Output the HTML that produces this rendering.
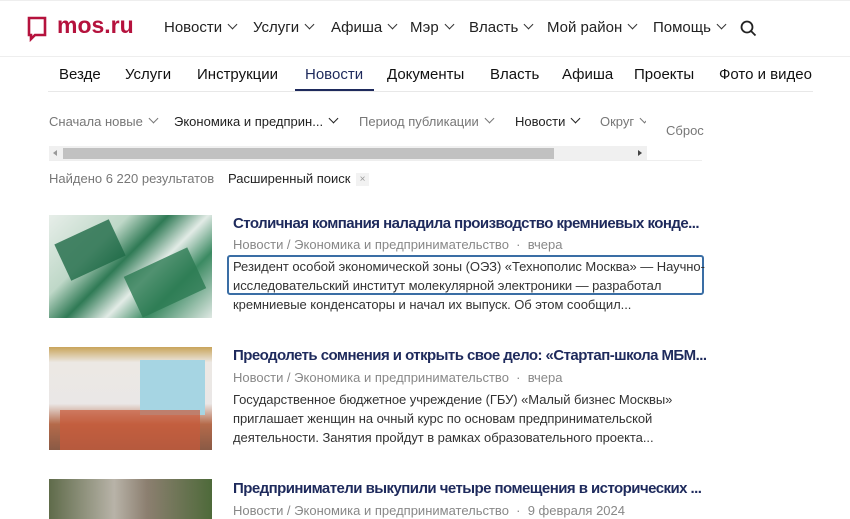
<!DOCTYPE html>
<html><head><meta charset="utf-8"><style>
*{margin:0;padding:0;box-sizing:border-box}
body{width:850px;height:508px;overflow:hidden;background:#fff;font-family:"Liberation Sans","DejaVu Sans",sans-serif;color:#222;position:relative}
.a{position:absolute;white-space:nowrap}
.chev{display:inline-block;width:7px;height:7px;border-right:1.5px solid #333;border-bottom:1.5px solid #333;transform:rotate(45deg);margin-left:7px;position:relative;top:-4px}
.top{font-size:15px;color:#222;top:19px}
.tab{font-size:15px;top:66px;color:#111}
.f{font-size:13px;top:114px;color:#777}
.t{font-size:15px;font-weight:bold;color:#1e2a5c;letter-spacing:-0.55px}
.m{font-size:13px;color:#888}
.d{font-size:13px;color:#333;line-height:19px;letter-spacing:-0.05px}
</style></head><body>
<div class="a" style="top:0;left:0;width:850px;height:1px;background:#eee"></div>
<svg class="a" style="left:27px;top:16px" width="20" height="26" viewBox="0 0 20 26"><path d="M2 2H18V19H8L4 23V19H2Z" fill="none" stroke="#b5123d" stroke-width="2.6" stroke-linejoin="miter"/></svg>
<div class="a" style="left:57px;top:12px;font-size:23px;font-weight:bold;color:#b5123d">mos.ru</div>
<div class="a top" style="left:164px">Новости<span class="chev"></span></div>
<div class="a top" style="left:253px">Услуги<span class="chev"></span></div>
<div class="a top" style="left:331px">Афиша<span class="chev"></span></div>
<div class="a top" style="left:410px">Мэр<span class="chev"></span></div>
<div class="a top" style="left:469px">Власть<span class="chev"></span></div>
<div class="a top" style="left:547px">Мой район<span class="chev"></span></div>
<div class="a top" style="left:653px">Помощь<span class="chev"></span></div>
<svg class="a" style="left:740px;top:20px" width="17" height="17" viewBox="0 0 17 17"><circle cx="7" cy="7" r="5.5" fill="none" stroke="#222" stroke-width="1.8"/><path d="M11 11L15.5 15.5" stroke="#222" stroke-width="1.8"/></svg>
<div class="a" style="top:56px;left:0;width:850px;height:1px;background:#eee"></div>
<div class="a tab" style="left:59px">Везде</div>
<div class="a tab" style="left:125px">Услуги</div>
<div class="a tab" style="left:197px">Инструкции</div>
<div class="a tab" style="left:305px;color:#1e2a5c">Новости</div>
<div class="a tab" style="left:387px">Документы</div>
<div class="a tab" style="left:490px">Власть</div>
<div class="a tab" style="left:562px">Афиша</div>
<div class="a tab" style="left:634px">Проекты</div>
<div class="a tab" style="left:719px">Фото и видео</div>
<div class="a" style="top:91px;left:48px;width:765px;height:1px;background:#e8e8e8"></div>
<div class="a" style="top:89px;left:295px;width:79px;height:2px;background:#1e2a5c"></div>
<div class="a f" style="left:49px">Сначала новые<span class="chev" style="border-color:#777"></span></div>
<div class="a f" style="left:174px;color:#222">Экономика и предприн...<span class="chev" style="border-color:#222"></span></div>
<div class="a f" style="left:359px">Период публикации<span class="chev" style="border-color:#777"></span></div>
<div class="a f" style="left:515px;color:#222">Новости<span class="chev" style="border-color:#222"></span></div>
<div class="a f" style="left:600px;width:46px;overflow:hidden">Округ<span class="chev" style="border-color:#777"></span></div>
<div class="a f" style="left:666px;top:123px">Сброс</div>
<div class="a" style="top:146px;left:49px;width:598px;height:14px;background:#f0f0f0"></div>
<div class="a" style="top:148px;left:63px;width:491px;height:11px;background:#c1c1c1"></div>
<div class="a" style="top:150px;left:53px;width:0;height:0;border:3px solid transparent;border-right:4px solid #999;border-left:0"></div>
<div class="a" style="top:150px;left:638px;width:0;height:0;border:3px solid transparent;border-left:4px solid #444;border-right:0"></div>
<div class="a" style="top:160px;left:49px;width:653px;height:1px;background:#eee"></div>
<div class="a" style="left:49px;top:171px;font-size:13px;color:#777">Найдено 6 220 результатов</div>
<div class="a" style="left:228px;top:171px;font-size:13px;color:#222">Расширенный поиск</div>
<div class="a" style="left:356px;top:173px;width:13px;height:13px;background:#f2f2f2;font-size:10px;color:#999;text-align:center;line-height:13px">×</div>
<div class="a" style="left:49px;top:215px;width:163px;height:103px;background:linear-gradient(135deg,#e7eee9 0%,#bfd8c8 30%,#2f7a55 45%,#e2ebe6 60%,#3b8a62 75%,#dfe8e3 100%)"></div>
<div class="a" style="left:60px;top:230px;width:60px;height:40px;background:#1f6a47;transform:rotate(-25deg);opacity:.8"></div>
<div class="a" style="left:130px;top:260px;width:70px;height:45px;background:#2c7a52;transform:rotate(-25deg);opacity:.8"></div>
<div class="a t" style="left:233px;top:215px">Столичная компания наладила производство кремниевых конде...</div>
<div class="a m" style="left:233px;top:237px">Новости / Экономика и предпринимательство &nbsp;·&nbsp; вчера</div>
<div class="a" style="left:227px;top:255px;width:477px;height:40px;border:2px solid #3a6ea5;border-radius:3px"></div>
<div class="a d" style="left:233px;top:257px">Резидент особой экономической зоны (ОЭЗ) «Технополис Москва» — Научно-<br>исследовательский институт молекулярной электроники — разработал<br>кремниевые конденсаторы и начал их выпуск. Об этом сообщил...</div>
<div class="a" style="left:49px;top:347px;width:163px;height:103px;background:linear-gradient(180deg,#c9a45a 0%,#ece8e4 15%,#eae7e6 55%,#b56a4a 75%,#8a5a45 100%)"></div>
<div class="a" style="left:140px;top:360px;width:65px;height:55px;background:#a6d5e3"></div>
<div class="a" style="left:60px;top:410px;width:140px;height:40px;background:#c95a3a;opacity:.7"></div>
<div class="a t" style="left:233px;top:347px">Преодолеть сомнения и открыть свое дело: «Стартап-школа МБМ...</div>
<div class="a m" style="left:233px;top:370px">Новости / Экономика и предпринимательство &nbsp;·&nbsp; вчера</div>
<div class="a d" style="left:233px;top:390px">Государственное бюджетное учреждение (ГБУ) «Малый бизнес Москвы»<br>приглашает женщин на очный курс по основам предпринимательской<br>деятельности. Занятия пройдут в рамках образовательного проекта...</div>
<div class="a" style="left:49px;top:479px;width:163px;height:40px;background:linear-gradient(90deg,#5f6b4a 0%,#b8b3a8 40%,#8c7f70 60%,#4e6a3a 100%)"></div>
<div class="a t" style="left:233px;top:480px">Предприниматели выкупили четыре помещения в исторических ...</div>
<div class="a m" style="left:233px;top:503px">Новости / Экономика и предпринимательство &nbsp;·&nbsp; 9 февраля 2024</div>
</body></html>
